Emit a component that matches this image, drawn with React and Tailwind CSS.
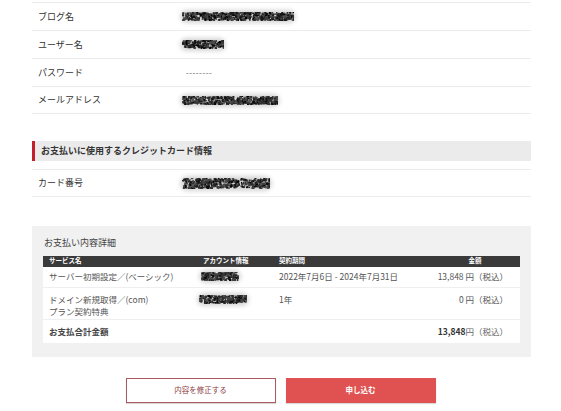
import React from 'react';

const font = { fontFamily: '"Noto Sans CJK JP", "Noto Sans", sans-serif' };

// 疑似乱数（毎回同じ模様にする）
const rng = (seed) => () => {
  seed = (seed * 9301 + 49297) % 233280;
  return seed / 233280;
};

// ぼかしで隠された値
const Redacted = ({ width, height = 9, seed = 1 }) => {
  const r = rng(seed);
  const dots = [];
  const n = Math.round(width * 5);
  for (let i = 0; i < n; i++) {
    const x = r() * width;
    const y = height / 2 + (r() - 0.5) * height * 0.85 - 1;
    const g = Math.floor(r() * 90);
    dots.push(
      <rect key={i} x={x} y={y} width={1 + r() * 1.8} height={1 + r() * 1.8} fill={`rgb(${g},${g},${g})`} />
    );
  }
  return (
    <div className="relative" style={{ width, height }}>
      <div className="absolute inset-[-2px] bg-[#d6d6d6] blur-[2px] rounded-full" />
      <svg className="absolute inset-0 blur-[0.3px]" width={width} height={height}>
        {dots}
      </svg>
    </div>
  );
};

const InfoRow = ({ label, children, last }) => (
  <div className={`flex items-center h-[28px] border-t border-[#ececec] ${last ? 'border-b' : ''}`}>
    <div className="w-[150px] pl-[6px] text-[9px] text-[#333]">{label}</div>
    <div className="flex items-center">{children}</div>
  </div>
);

const cols = 'grid grid-cols-[154px_76px_1fr_100px]';

export default function App() {
  return (
    <div className="min-h-screen bg-white" style={font}>
      <div className="w-[499px] ml-[32px] pt-[2px]">
        <InfoRow label="ブログ名"><Redacted width={112} seed={3} /></InfoRow>
        <InfoRow label="ユーザー名"><Redacted width={42} seed={7} /></InfoRow>
        <InfoRow label="パスワード">
          <span className="text-[8px] text-[#555] tracking-[0.5px] pl-[4px]">--------</span>
        </InfoRow>
        <InfoRow label="メールアドレス" last><Redacted width={96} seed={11} /></InfoRow>

        <div className="mt-[27px] h-[20px] flex items-center bg-[#ebebeb] border-l-[3px] border-[#c4202c] pl-[6px] text-[9px] font-bold text-[#333]">
          お支払いに使用するクレジットカード情報
        </div>

        <div className="mt-[8px]">
          <InfoRow label="カード番号" last><Redacted width={88} height={11} seed={19} /></InfoRow>
        </div>

        <div className="mt-[29px] bg-[#f1f1f1] px-[11px] pt-[10px] pb-[14px]">
          <div className="text-[9px] text-[#444] mb-[6px] pl-[1px]">お支払い内容詳細</div>
          <div className="bg-white">
            <div className={`${cols} h-[11px] items-center bg-[#3a3a3a] text-white text-[6.5px] font-bold`}>
              <div className="pl-[6px]">サービス名</div>
              <div className="pl-[6px]">アカウント情報</div>
              <div className="pl-[6px]">契約期間</div>
              <div className="text-center pl-[10px]">金額</div>
            </div>
            <div className={`${cols} h-[21px] items-center text-[8.5px] text-[#555] border-b border-[#efefef]`}>
              <div className="pl-[6px]">サーバー初期設定／(ベーシック)</div>
              <div className="pl-[4px]"><Redacted width={38} seed={23} /></div>
              <div className="pl-[6px]">2022年7月6日 - 2024年7月31日</div>
              <div className="text-right pr-[12px]">13,848 円（税込）</div>
            </div>
            <div className={`${cols} h-[32px] items-start pt-[5px] text-[8.5px] text-[#555] leading-[12px] border-b border-[#efefef]`}>
              <div className="pl-[6px]">ドメイン新規取得／(com)<br />プラン契約特典</div>
              <div className="pl-[2px] pt-[2px]"><Redacted width={48} seed={29} /></div>
              <div className="pl-[6px]">1年</div>
              <div className="text-right pr-[12px]">0 円（税込）</div>
            </div>
            <div className={`${cols} h-[23px] items-center text-[8.5px] text-[#444]`}>
              <div className="pl-[6px] font-bold">お支払合計金額</div>
              <div />
              <div />
              <div className="text-right pr-[12px] text-[#666]"><span className="font-bold text-[#333]">13,848</span>円（税込）</div>
            </div>
          </div>
        </div>
      </div>

      <div className="flex justify-center gap-[10px] mt-[21px]">
        <button className="w-[150px] h-[25px] border border-[#a85a62] bg-white text-[#8b3a42] text-[7.5px] shadow-[0_1px_1px_rgba(0,0,0,0.15)]">
          内容を修正する
        </button>
        <button className="w-[150px] h-[25px] bg-[#e05252] text-white text-[7.5px] font-bold shadow-[0_1px_1px_rgba(0,0,0,0.15)]">
          申し込む
        </button>
      </div>
    </div>
  );
}
